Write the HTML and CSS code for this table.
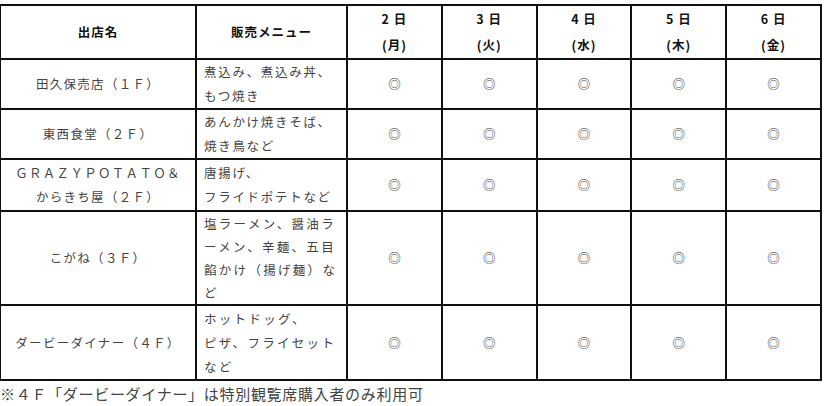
FILE: index.html
```html
<!DOCTYPE html>
<html lang="ja">
<head>
<meta charset="utf-8">
<link rel="stylesheet" href="styles.css">
</head>
<body>
<div class="page">
<table class="schedule">
  <colgroup>
    <col class="c-shop"><col class="c-menu"><col class="c-day"><col class="c-day"><col class="c-day"><col class="c-day"><col class="c-day">
  </colgroup>
  <thead>
    <tr class="r-head">
      <th>出店名</th>
      <th>販売メニュー</th>
      <th class="day">2 日<br>(月)</th>
      <th class="day">3 日<br>(火)</th>
      <th class="day">4 日<br>(水)</th>
      <th class="day">5 日<br>(木)</th>
      <th class="day">6 日<br>(金)</th>
    </tr>
  </thead>
  <tbody>
    <tr class="r1">
      <td class="shop">田久保売店（１Ｆ）</td>
      <td class="menu">煮込み、煮込み丼、<br>もつ焼き</td>
      <td class="mark">◎</td><td class="mark">◎</td><td class="mark">◎</td><td class="mark">◎</td><td class="mark">◎</td>
    </tr>
    <tr class="r2">
      <td class="shop">東西食堂（２Ｆ）</td>
      <td class="menu">あんかけ焼きそば、<br>焼き鳥など</td>
      <td class="mark">◎</td><td class="mark">◎</td><td class="mark">◎</td><td class="mark">◎</td><td class="mark">◎</td>
    </tr>
    <tr class="r3">
      <td class="shop">ＧＲＡＺＹＰＯＴＡＴＯ＆<br>からきち屋（２Ｆ）</td>
      <td class="menu">唐揚げ、<br>フライドポテトなど</td>
      <td class="mark">◎</td><td class="mark">◎</td><td class="mark">◎</td><td class="mark">◎</td><td class="mark">◎</td>
    </tr>
    <tr class="r4">
      <td class="shop">こがね（３Ｆ）</td>
      <td class="menu wide">塩ラーメン、醤油ラ<br>ーメン、辛麺、五目<br>餡かけ（揚げ麺）な<br>ど</td>
      <td class="mark">◎</td><td class="mark">◎</td><td class="mark">◎</td><td class="mark">◎</td><td class="mark">◎</td>
    </tr>
    <tr class="r5">
      <td class="shop">ダービーダイナー（４Ｆ）</td>
      <td class="menu wide">ホットドッグ、<br>ピザ、フライセット<br>など</td>
      <td class="mark">◎</td><td class="mark">◎</td><td class="mark">◎</td><td class="mark">◎</td><td class="mark">◎</td>
    </tr>
  </tbody>
</table>
<p class="note">※４Ｆ「ダービーダイナー」は特別観覧席購入者のみ利用可</p>
</div>
</body>
</html>
```

FILE: styles.css
```css
html, body {
  margin: 0;
  padding: 0;
  background: #ffffff;
}

.page {
  padding-top: 4px;
  font-family: "Noto Sans CJK JP", "Noto Sans", sans-serif;
  color: #444;
}

.schedule {
  border-collapse: collapse;
  table-layout: fixed;
  width: 821px;
  margin-left: -1px;
}

.c-shop { width: 196px; }
.c-menu { width: 151px; }
.c-day { width: 94.8px; }

.schedule th,
.schedule td {
  border: 2px solid #111;
  padding: 0;
  font-size: 12.5px;
  line-height: 24px;
  white-space: nowrap;
  overflow: hidden;
}

.schedule th {
  color: #111;
  font-weight: bold;
  text-align: center;
  letter-spacing: 1px;
}

.schedule th.day {
  line-height: 26px;
  letter-spacing: 1px;
}

.r-head { height: 53px; }
.r1 { height: 48px; }
.r2 { height: 48px; }
.r3 { height: 52px; }
.r4 { height: 94px; }
.r5 { height: 75px; }

.r4 .menu { line-height: 23px; }

.shop {
  text-align: center;
  letter-spacing: 1.3px;
}

.menu {
  text-align: left;
  padding-left: 7px !important;
  letter-spacing: 1.7px;
}

.menu.wide {
  letter-spacing: 2.3px;
}

.mark {
  text-align: center;
  color: #333;
  font-size: 15px;
}

.note {
  margin: 4px 0 0 0;
  font-size: 15px;
  line-height: 18px;
  letter-spacing: 0.7px;
  color: #444;
  white-space: nowrap;
}
```
